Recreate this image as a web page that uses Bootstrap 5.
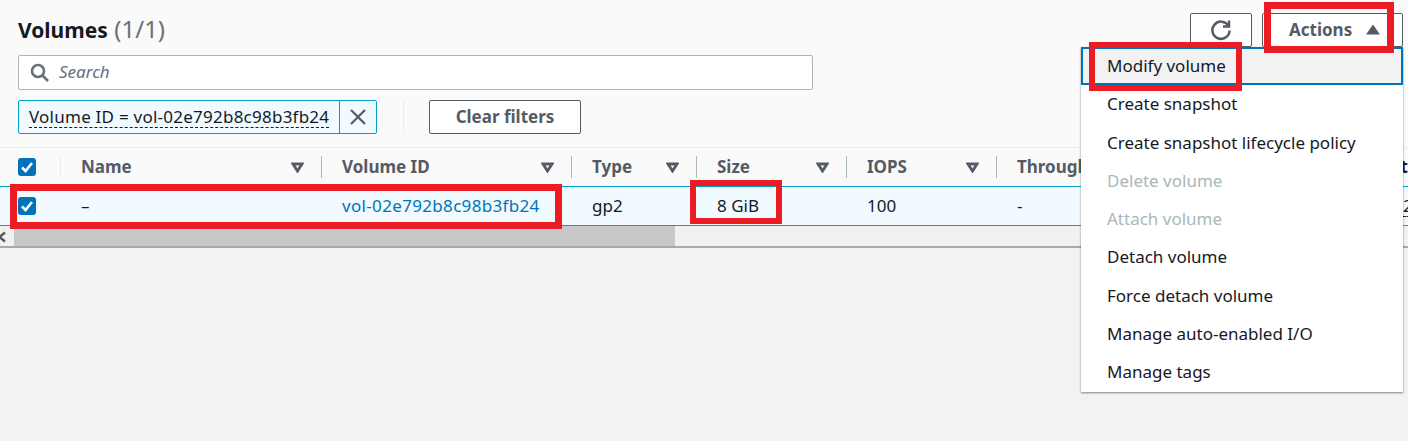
<!DOCTYPE html>
<html lang="en">
<head>
<meta charset="utf-8">
<title>Volumes</title>
<link rel="stylesheet" href="https://cdn.jsdelivr.net/npm/bootstrap@5.3.0/dist/css/bootstrap.min.css">
<style>
html,body{height:441px;overflow:hidden}
body{background:#f2f2f2;font-family:"Noto Sans",sans-serif;font-size:17px;color:#16191f;position:relative}
.vol-panel{background:#fafafa;height:248px;border-bottom:2px solid #a9a9a9;overflow:hidden}
.vol-top{padding:12px 5px 0 18px;height:55px}
.vol-title{font-size:21px;font-weight:700;line-height:33px;margin:0}
.vol-title span{font-weight:400;color:#687078;font-size:24px;margin-left:1px}
.vol-btns{margin-top:1px}
.vol-btn{background:#fff;border:1px solid #545b64;border-radius:2px;height:34px;color:#545b64;font-weight:700;font-size:17px;padding:0;line-height:32px}
.vol-refresh{width:62px}
.vol-actions{width:141px;margin-left:10px;padding-left:26px;gap:14px}
.vol-actions svg{margin-top:-2px}
.vol-search{margin:0 0 0 18px;width:795px;height:35px;background:#fff;border:1px solid #aab7b8;border-radius:2px;padding-left:11px;color:#687078;font-style:italic}
.vol-search span{margin-left:1px;line-height:33px;margin-top:-2px}
.vol-filters{margin:10px 0 0 18px;height:34px}
.vol-token{border:1px solid #00a1c9;background:#f1faff;border-radius:2px;height:34px;width:359px;line-height:32px}
.vol-token-text{padding:0 0 0 10px;width:321px;white-space:nowrap;letter-spacing:.24px}
.vol-token-text span{border-bottom:1px dashed #16191f;line-height:21px;display:inline-block}
.vol-token-x{border-left:1px solid #00a1c9;width:37px}
.vol-vr{width:1px;background:#eaeded;height:34px;margin:0 25px 0 26px}
.vol-clear{width:152px;height:34px}
.vol-tablewrap{margin-top:13px;overflow:hidden;border-top:1px solid #eaeded}
.vol-table{table-layout:fixed;width:1408px;border-collapse:collapse;margin:0}
.vol-table th,.vol-table td{padding:0 0 0 20px;white-space:nowrap;vertical-align:middle}
.vol-table th:first-child,.vol-table td:first-child{padding-left:18px}
.vol-table th.vol-last,.vol-table td.vol-last{padding:0}
.vol-c0{width:61px}.vol-c1{width:261px}.vol-c2{width:250px}.vol-c3{width:125px}.vol-c4{width:150px}.vol-c5{width:150px}.vol-c6{width:406px}.vol-c7{width:5px}
.vol-table thead tr{height:38px}
.vol-table th{color:#545b64;font-weight:700;position:relative}
.vol-table th.vol-last{color:#16191f}
.vol-date{border-bottom:1px dashed #16191f;line-height:20px;display:inline-block}
.vol-table th i{position:absolute;right:0;top:8px;width:1px;height:22px;background:#aab7b8}
.vol-table th:first-child i{background:#eaeded}
.vol-table th svg.vol-tri{position:absolute;right:18px;top:14px}
.vol-table tbody tr{height:39px;background:#f1faff;border-top:1px solid #00a1c9;border-bottom:1px solid #00a1c9}
.vol-check{width:18px;height:18px;background:#0073bb;border-radius:3px;display:flex;align-items:center;justify-content:center}
.vol-link{color:#0073bb;text-decoration:none;letter-spacing:.33px}
.vol-scroll{height:22px;background:#f1f1f1}
.vol-arrow{width:14px;background:#f1f1f1;overflow:hidden}
.vol-arrow svg{margin-left:-3px;flex:none}
.vol-thumb{width:661px;background:#c8c8c8}
.vol-menu{position:absolute;left:1081px;top:47px;width:322px;height:345px;background:#fff;box-shadow:0 1px 2px rgba(0,28,36,.5);margin:0;padding:0;list-style:none}
.vol-menu li{height:38.3px;line-height:38.6px;padding-left:26px;white-space:nowrap}
.vol-menu li.vol-first{background:#f2f2f2;border:2px solid #0073bb;padding-left:24px;line-height:34px}
.vol-menu li.vol-off{color:#aab7b8}
.vol-red{position:absolute;border:solid #ed1c24;pointer-events:none}
.vol-red1{left:10px;top:184px;width:552px;height:45px;border-width:7px}
.vol-red2{left:690px;top:180px;width:92px;height:44px;border-width:6px}
.vol-red3{left:1264px;top:2px;width:130px;height:51px;border-width:7px}
.vol-red4{left:1089px;top:42px;width:153px;height:49px;border-width:6px}
</style>
</head>
<body>
<section class="vol-panel">
  <div class="vol-top d-flex justify-content-between align-items-start">
    <h2 class="vol-title">Volumes <span>(1/1)</span></h2>
    <div class="d-flex vol-btns">
      <button class="vol-btn vol-refresh" aria-label="Refresh"><svg width="22" height="22" viewBox="0 0 22 22" fill="none" stroke="#545b64" stroke-width="2.5" class="d-block mx-auto"><path d="M18.5 7A8.6 8.6 0 1 0 19.6 11.5"/><path d="M19 1.5V7.5H13"/></svg></button>
      <button class="vol-btn vol-actions d-flex align-items-center">Actions <svg width="14" height="11" viewBox="0 0 14 11"><path d="M7 0.5 14 10.5H0Z" fill="#545b64"/></svg></button>
    </div>
  </div>
  <div class="vol-search d-flex align-items-center gap-2">
    <svg width="20" height="20" viewBox="0 0 20 20" fill="none" stroke="#687078" stroke-width="2.6"><circle cx="8" cy="8" r="6"/><path d="M12.5 12.5 18 18"/></svg>
    <span>Search</span>
  </div>
  <div class="vol-filters d-flex">
    <div class="vol-token d-flex">
      <div class="vol-token-text"><span>Volume ID = vol-02e792b8c98b3fb24</span></div>
      <div class="vol-token-x d-flex align-items-center justify-content-center"><svg width="18" height="18" viewBox="0 0 18 18" stroke="#545b64" stroke-width="2.2"><path d="M2 2 16 16M16 2 2 16"/></svg></div>
    </div>
    <div class="vol-vr"></div>
    <button class="vol-btn vol-clear">Clear filters</button>
  </div>
  <div class="vol-tablewrap">
    <table class="vol-table">
      <colgroup><col class="vol-c0"><col class="vol-c1"><col class="vol-c2"><col class="vol-c3"><col class="vol-c4"><col class="vol-c5"><col class="vol-c6"><col class="vol-c7"></colgroup>
      <thead>
        <tr>
          <th><div class="vol-check"><svg width="14" height="14" viewBox="0 0 14 14" fill="none" stroke="#fff" stroke-width="2.6"><path d="M2 7.5 5.5 11 12 3"/></svg></div><i></i></th>
          <th>Name<svg class="vol-tri" width="13" height="11" viewBox="0 0 13 11" fill="none" stroke="#545b64" stroke-width="2.8"><path d="M2 2H11L6.5 9Z"/></svg><i></i></th>
          <th>Volume ID<svg class="vol-tri" width="13" height="11" viewBox="0 0 13 11" fill="none" stroke="#545b64" stroke-width="2.8"><path d="M2 2H11L6.5 9Z"/></svg><i></i></th>
          <th>Type<svg class="vol-tri" width="13" height="11" viewBox="0 0 13 11" fill="none" stroke="#545b64" stroke-width="2.8"><path d="M2 2H11L6.5 9Z"/></svg><i></i></th>
          <th>Size<svg class="vol-tri" width="13" height="11" viewBox="0 0 13 11" fill="none" stroke="#545b64" stroke-width="2.8"><path d="M2 2H11L6.5 9Z"/></svg><i></i></th>
          <th>IOPS<svg class="vol-tri" width="13" height="11" viewBox="0 0 13 11" fill="none" stroke="#545b64" stroke-width="2.8"><path d="M2 2H11L6.5 9Z"/></svg><i></i></th>
          <th>Throughput</th>
          <th class="vol-last"><div class="d-flex justify-content-end">Snapshot</div></th>
        </tr>
      </thead>
      <tbody>
        <tr>
          <td><div class="vol-check"><svg width="14" height="14" viewBox="0 0 14 14" fill="none" stroke="#fff" stroke-width="2.6"><path d="M2 7.5 5.5 11 12 3"/></svg></div></td>
          <td>–</td>
          <td><a class="vol-link" href="#">vol-02e792b8c98b3fb24</a></td>
          <td>gp2</td>
          <td>8 GiB</td>
          <td>100</td>
          <td>-</td>
          <td class="vol-last"><span class="vol-date">2</span></td>
        </tr>
      </tbody>
    </table>
  </div>
  <div class="vol-scroll d-flex">
    <div class="vol-arrow d-flex align-items-center"><svg width="10" height="12" viewBox="0 0 10 12" fill="none" stroke="#545b64" stroke-width="2.4"><path d="M8 1.5 2.5 6 8 10.5"/></svg></div>
    <div class="vol-thumb"></div>
  </div>
</section>
<ul class="vol-menu">
  <li class="vol-first">Modify volume</li>
  <li>Create snapshot</li>
  <li>Create snapshot lifecycle policy</li>
  <li class="vol-off">Delete volume</li>
  <li class="vol-off">Attach volume</li>
  <li>Detach volume</li>
  <li>Force detach volume</li>
  <li>Manage auto-enabled I/O</li>
  <li>Manage tags</li>
</ul>
<div class="vol-red vol-red1"></div>
<div class="vol-red vol-red2"></div>
<div class="vol-red vol-red3"></div>
<div class="vol-red vol-red4"></div>
<script src="https://cdn.jsdelivr.net/npm/bootstrap@5.3.0/dist/js/bootstrap.bundle.min.js"></script>
</body>
</html>
